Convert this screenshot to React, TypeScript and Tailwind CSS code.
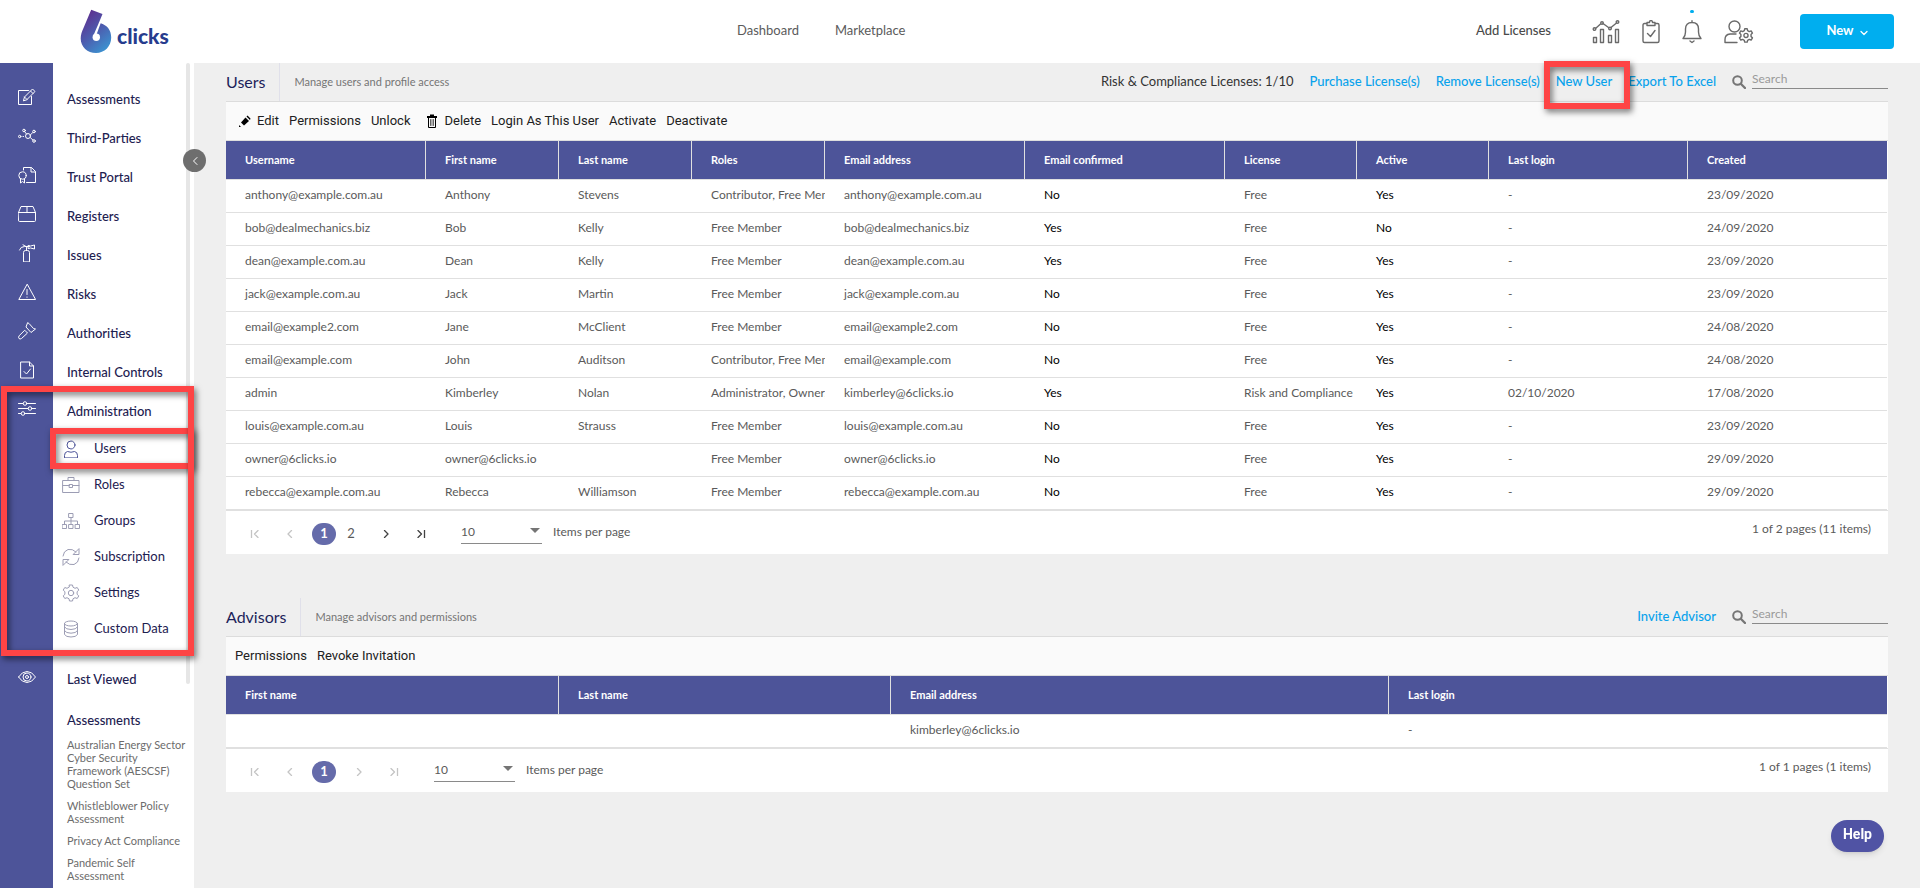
import type { ReactNode } from 'react'
import clsx from 'clsx'

interface IconProps {
  children: ReactNode
  className?: string
  box?: string
  weight?: number
}

// Thin line icon, one unit per pixel at its usual size
function Icon({ children, className = 'size-[18px]', box = '0 0 18 18', weight = 1 }: IconProps) {
  return (
    <svg
      viewBox={box}
      className={clsx('shrink-0', className)}
      fill="none"
      stroke="currentColor"
      strokeWidth={weight}
      strokeLinecap="round"
      strokeLinejoin="round"
      aria-hidden="true"
    >
      {children}
    </svg>
  )
}

const modules = [
  {
    label: 'Assessments',
    icon: (
      <>
        <path d="M10.500 2.500h-10v14h13V8.500" />
        <path d="M5.500 12.500l1-3.500 8-8 2.500 2.500-8 8zM12.500 3l2.500 2.500M6.500 9l2.500 2.500" />
      </>
    ),
  },
  {
    label: 'Third-Parties',
    icon: (
      <>
        <circle cx="10" cy="9" r="2.500" />
        <circle cx="6" cy="3.500" r="1.300" />
        <circle cx="16" cy="4.500" r="1.300" />
        <circle cx="16" cy="14" r="1.300" />
        <circle cx="1.700" cy="9.500" r="1.200" />
        <path d="M6.700 4.700 8.500 7M12.300 8l2.500-2.500M12.300 10.500l2.500 2.500M5 9.500h.5" />
      </>
    ),
  },
  {
    label: 'Trust Portal',
    icon: (
      <>
        <path d="M5.500 4V1.500h8l4 4v11h-9M13 1.500v4.500h4.500" />
        <circle cx="4.500" cy="9.500" r="3.700" />
        <path d="M2.500 13v4l2-1.500 2 1.500v-4" />
      </>
    ),
  },
  {
    label: 'Registers',
    icon: <path d="M.5 7.500h17v8q0 1-1 1h-15q-1 0-1-1zM.5 7.500l2.500-6h12l2.500 6M9 1.500v6" />,
  },
  {
    label: 'Issues',
    icon: (
      <>
        <path d="M5.500 17.500v-9q0-2 2-2h2q2 0 2 2v9zM8.500 6.500v-3M1.500 6q1-3.500 5-3.500h5M5 .8l3 1.700" />
        <path d="M10.500 1.500l2 .5 4-1v4l-4-1-2 .5z" />
      </>
    ),
  },
  {
    label: 'Risks',
    icon: (
      <>
        <path d="M9 1.500.8 16.500h16.400z" />
        <path d="M9 6.500v5M9 14v.3" />
      </>
    ),
  },
  {
    label: 'Authorities',
    icon: (
      <>
        <path d="M9.500 1l-1.500 4 5 5.500L17.500 7l-2-.5-4-4.500z" />
        <path d="M7 8.500l2.500 2.500-6 5.500q-1.500 1-2.500 0t0-2.500z" />
      </>
    ),
  },
  {
    label: 'Internal Controls',
    icon: (
      <>
        <path d="M3 1h8.500l4 4v12H3zM11.500 1v4h4" />
        <path d="M6 10.500l2.500 2.500 4-5" />
      </>
    ),
  },
]

const slidersIcon = (
  <>
    <path d="M.5 3.500h4.500M9 3.500h8.500M.5 8.500h9.500M14 8.500h3.500M.5 13.500h2.500M7 13.500h10.500" />
    <circle cx="7" cy="3.500" r="1.800" />
    <circle cx="12" cy="8.500" r="1.800" />
    <circle cx="5" cy="13.500" r="1.800" />
  </>
)

const gearPath =
  'M7.500 1h3l.5 2.200 2 1.100 2.200-.8 1.600 2.600-1.700 1.600v2.600l1.700 1.600-1.600 2.600-2.200-.8-2 1.100-.5 2.200h-3L7 14.800l-2-1.100-2.200.8-1.600-2.600 1.700-1.600V7.700L1.200 6.100l1.600-2.600 2.200.8 2-1.100z'

const adminItems = [
  {
    label: 'Users',
    icon: (
      <>
        <circle cx="9" cy="5" r="4" />
        <path d="M2.500 17.500v-2q0-3.500 3-4 3.500 1.500 7 0 3 .5 3 4v2z" />
      </>
    ),
  },
  {
    label: 'Roles',
    icon: <path d="M1 4.500h16v12H1zM6 4.500v-3h6v3M1 9.500h6.500M10.500 9.500H17M7.500 8.500h3v3h-3z" />,
  },
  {
    label: 'Groups',
    icon: (
      <path d="M7 1.500h4v4H7zM.5 12.500h4v4h-4zM7 12.500h4v4H7zM13.500 12.500h4v4h-4zM9 5.500v7M2.500 12.500V9h13v3.500" />
    ),
  },
  {
    label: 'Subscription',
    icon: (
      <>
        <path d="M1 8q.5-5 5-6.500 4.500-1 8 2.500M17 10q-.5 5-5 6.500-4.500 1-8-2.500" />
        <path d="M17 1v5.500h-5.500zM1 17v-5.500h5.500z" />
      </>
    ),
  },
  {
    label: 'Settings',
    icon: (
      <>
        <path d={gearPath} />
        <circle cx="9" cy="9" r="2.700" />
      </>
    ),
  },
  {
    label: 'Custom Data',
    icon: (
      <>
        <ellipse cx="9" cy="3.500" rx="6.500" ry="2.500" />
        <path d="M2.500 3.500v11q1.500 2.500 6.500 2.500t6.500-2.500v-11M2.500 7q1.500 2.500 6.500 2.500T15.500 7M2.500 10.700q1.500 2.500 6.500 2.500t6.500-2.500" />
      </>
    ),
  },
]

const recentAssessments = [
  'Australian Energy Sector Cyber Security Framework (AESCSF) Question Set',
  'Whistleblower Policy Assessment',
  'Privacy Act Compliance',
  'Pandemic Self Assessment',
]

interface Column {
  title: string
  width: string
  strong?: boolean
}

const userColumns: Column[] = [
  { title: 'Username', width: 'w-[200px]' },
  { title: 'First name', width: 'w-[133px]' },
  { title: 'Last name', width: 'w-[133px]' },
  { title: 'Roles', width: 'w-[133px]' },
  { title: 'Email address', width: 'w-[200px]' },
  { title: 'Email confirmed', width: 'w-[200px]', strong: true },
  { title: 'License', width: 'w-[132px]' },
  { title: 'Active', width: 'w-[132px]', strong: true },
  { title: 'Last login', width: 'w-[199px]' },
  { title: 'Created', width: 'w-[199px]' },
]

const users = [
  ['anthony@example.com.au', 'Anthony', 'Stevens', 'Contributor, Free Member', 'anthony@example.com.au', 'No', 'Free', 'Yes', '-', '23/09/2020'],
  ['bob@dealmechanics.biz', 'Bob', 'Kelly', 'Free Member', 'bob@dealmechanics.biz', 'Yes', 'Free', 'No', '-', '24/09/2020'],
  ['dean@example.com.au', 'Dean', 'Kelly', 'Free Member', 'dean@example.com.au', 'Yes', 'Free', 'Yes', '-', '23/09/2020'],
  ['jack@example.com.au', 'Jack', 'Martin', 'Free Member', 'jack@example.com.au', 'No', 'Free', 'Yes', '-', '23/09/2020'],
  ['email@example2.com', 'Jane', 'McClient', 'Free Member', 'email@example2.com', 'No', 'Free', 'Yes', '-', '24/08/2020'],
  ['email@example.com', 'John', 'Auditson', 'Contributor, Free Member', 'email@example.com', 'No', 'Free', 'Yes', '-', '24/08/2020'],
  ['admin', 'Kimberley', 'Nolan', 'Administrator, Owner,', 'kimberley@6clicks.io', 'Yes', 'Risk and Compliance', 'Yes', '02/10/2020', '17/08/2020'],
  ['louis@example.com.au', 'Louis', 'Strauss', 'Free Member', 'louis@example.com.au', 'No', 'Free', 'Yes', '-', '23/09/2020'],
  ['owner@6clicks.io', 'owner@6clicks.io', '', 'Free Member', 'owner@6clicks.io', 'No', 'Free', 'Yes', '-', '29/09/2020'],
  ['rebecca@example.com.au', 'Rebecca', 'Williamson', 'Free Member', 'rebecca@example.com.au', 'No', 'Free', 'Yes', '-', '29/09/2020'],
]

const advisorColumns: Column[] = [
  { title: 'First name', width: 'w-[333px]' },
  { title: 'Last name', width: 'w-[332px]' },
  { title: 'Email address', width: 'w-[498px]' },
  { title: 'Last login', width: 'w-[498px]' },
]

const advisors = [['', '', 'kimberley@6clicks.io', '-']]

function Highlight({ className }: { className: string }) {
  return (
    <span
      className={clsx(
        'pointer-events-none absolute z-20 border-6 border-[#fe4445] drop-shadow-[2px_3px_3px_rgba(0,0,0,0.55)]',
        className,
      )}
    />
  )
}

function Logo() {
  return (
    <a href="#" className="flex items-center gap-1" aria-label="6 clicks">
      <svg viewBox="80 9 33 45" className="h-[45px] w-[33px]" aria-hidden="true">
        <defs>
          <linearGradient id="six" x1="0.2" y1="0" x2="0.8" y2="1">
            <stop offset="0" stopColor="#5f2a8c" />
            <stop offset="0.5" stopColor="#4d5cae" />
            <stop offset="1" stopColor="#3a97d3" />
          </linearGradient>
        </defs>
        <path
          d="M91.200 9.700 102.500 14 98.700 23.300 100.800 23.300C107.500 25.500 111.200 30.500 111.200 37.500 111.200 46.500 104.500 53 96 53 87.500 53 80.700 47 80.700 38.500 80.700 34.500 82 31.500 83.500 28z"
          fill="url(#six)"
        />
        <circle cx="96.300" cy="37.300" r="3.700" fill="#fff" />
        <path d="M101.300 21.500 99 22.500 93.200 36 96.500 34.500z" fill="#fff" />
      </svg>
      <span className="pt-2 text-[21px] leading-6 font-black text-[#263c8e]">clicks</span>
    </a>
  )
}

function TopBar() {
  return (
    <header className="flex h-[63px] items-center bg-white pr-[26px] pl-20 text-[13px] text-[#5b5b5b]">
      <div className="w-[657px]">
        <Logo />
      </div>
      <nav className="flex gap-9 pb-0.5" aria-label="Primary">
        <a href="#">Dashboard</a>
        <a href="#">Marketplace</a>
      </nav>
      <div className="flex flex-1 items-center justify-end">
        <a href="#" className="mr-[41px] pb-0.5 font-medium text-[#4a4a4a]">
          Add Licenses
        </a>
        <div className="flex items-center gap-[22px] text-[#6a6a6a]">
          <button type="button" aria-label="Reports">
            <Icon className="h-6 w-7" box="0 0 28 24" weight={1.4}>
              <path d="M1.500 17.500h3v5h-3zM8.500 9.500h3v13h-3zM16.500 15.500h3v7h-3zM23.500 9.500h3v13h-3z" />
              <path d="M3.500 8.500l5-4.500M11 3.500l5.500 4M19 7.500l5.500-4.500" />
              <circle cx="2.500" cy="9" r="1.300" />
              <circle cx="10" cy="3" r="1.300" />
              <circle cx="18" cy="8.500" r="1.300" />
              <circle cx="25.500" cy="2" r="1.300" />
            </Icon>
          </button>
          <button type="button" aria-label="Tasks">
            <Icon className="h-6 w-[18px]" box="0 0 18 24" weight={1.4}>
              <path d="M4.500 3.500h-2q-1.500 0-1.500 1.500v16q0 1.500 1.500 1.500h13q1.500 0 1.500-1.500V5q0-1.500-1.500-1.500h-2" />
              <path d="M5 2.500h2.500q0-2 1.500-2t1.500 2H13v3H5zM5.500 13.500l3 3 4.500-6" />
            </Icon>
          </button>
          <button type="button" aria-label="Notifications" className="relative">
            <Icon className="h-6 w-5" box="0 0 20 24" weight={1.4}>
              <path d="M1 18.500q2.500-2.500 2.500-6.500V9q0-6.500 6.500-6.500T16.500 9v3q0 4 2.500 6.500zM10 .8v1.700M8 21l2 1.500 2-1.500" />
            </Icon>
            <span className="absolute -top-2.5 left-2 h-[3px] w-1 rounded-sm bg-[#00aeef]" />
          </button>
          <button type="button" aria-label="Account settings">
            <Icon className="h-6 w-[30px]" box="0 0 30 24" weight={1.4}>
              <circle cx="10.500" cy="6.500" r="5.500" />
              <path d="M13 22.500H1v-3q0-5 5-5.500h6" />
              <g transform="translate(14.500 8) scale(.83)">
                <path d={gearPath} strokeWidth="1.700" />
                <circle cx="9" cy="9" r="2.500" strokeWidth="1.700" />
              </g>
            </Icon>
          </button>
        </div>
        <button
          type="button"
          className="ml-[46px] flex h-[35px] w-[94px] items-center justify-center gap-1.5 rounded-sm bg-[#00aeef] pb-0.5 text-[13px] font-bold text-white"
        >
          New
          <Icon className="mt-1 h-1.5 w-2" box="0 0 8 6">
            <path d="M1 1.500l3 3 3-3" strokeWidth="1.300" />
          </Icon>
        </button>
      </div>
    </header>
  )
}

function Sidebar() {
  return (
    <aside className="relative flex shrink-0">
      <div className="flex w-[53px] flex-col items-center bg-[#4d5499] pt-3.5 text-white">
        {modules.map((item) => (
          <span key={item.label} className="flex h-[39px] items-center">
            <Icon>{item.icon}</Icon>
          </span>
        ))}
        <span className="flex h-[39px] items-center">
          <Icon>{slidersIcon}</Icon>
        </span>
        <span className="mt-[229px] flex h-[39px] items-center">
          <Icon>
            <path d="M.5 9Q4 3.500 9 3.500T17.500 9Q14 14.500 9 14.500T.5 9z" />
            <circle cx="9" cy="9" r="4" />
            <circle cx="9" cy="9" r="1.500" />
          </Icon>
        </span>
      </div>

      <nav className="relative w-[141px] bg-white pt-[17px] text-[13px] text-[#1d2050]" aria-label="Modules">
        <ul>
          {modules.map((item) => (
            <li key={item.label}>
              <a href="#" className="flex h-[39px] items-center pl-3.5 font-medium">
                {item.label}
              </a>
            </li>
          ))}
          <li className="relative">
            <a href="#" className="flex h-[39px] items-center pl-3.5 font-medium">
              Administration
            </a>
            <ul>
              {adminItems.map((item, i) => (
                <li key={item.label} className="relative">
                  <a href="#" className="flex h-9 items-center gap-3.5 pl-[9px]">
                    <span className={i === 0 ? 'text-[#4d5499]' : 'text-[#9c9db4]'}>
                      <Icon>{item.icon}</Icon>
                    </span>
                    {item.label}
                  </a>
                  {i === 0 && <Highlight className="-top-[3px] right-0 -bottom-[2px] -left-[3px]" />}
                </li>
              ))}
            </ul>
            <Highlight className="-top-1.5 right-0 -bottom-[9px] -left-[52px]" />
          </li>
        </ul>

        <div className="mt-[13px] pl-3.5">
          <h2 className="flex h-[39px] items-center font-medium">Last Viewed</h2>
          <h3 className="mt-[11px] mb-2 leading-5 font-medium">Assessments</h3>
          <ul className="flex flex-col gap-[9px] text-[11px] leading-[13px] text-[#6c6c6c]">
            {recentAssessments.map((name) => (
              <li key={name} className="max-w-[120px]">
                <a href="#">{name}</a>
              </li>
            ))}
          </ul>
        </div>

        {/* scroll thumb */}
        <span className="absolute top-0 right-1 h-[621px] w-1 rounded-sm bg-[#e6e6e6]" />
      </nav>

      <button
        type="button"
        aria-label="Collapse menu"
        className="absolute top-[86px] -right-3 z-10 flex size-[23px] items-center justify-center rounded-full bg-[#6e6e6e] text-white"
      >
        <Icon className="h-2 w-1.5" box="0 0 6 8">
          <path d="M5 .5 1.500 4 5 7.500" />
        </Icon>
      </button>
    </aside>
  )
}

interface SectionHeaderProps {
  title: string
  subtitle: string
  searchId: string
  children: ReactNode
}

function SectionHeader({ title, subtitle, searchId, children }: SectionHeaderProps) {
  return (
    <div className="flex h-[39px] items-center border-b border-[#dcdcdc]">
      <h1 className="flex h-full items-center border-r border-[#e0e0ea] pr-3.5 text-base text-[#1d1f5a]">{title}</h1>
      <p className="pl-3.5 text-[11px] text-[#757575]">{subtitle}</p>
      <div className="ml-auto flex items-center gap-4 text-[13px] text-[#09a2ec]">
        {children}
        <div className="flex items-center gap-1.5">
          <label htmlFor={searchId} aria-label="Search">
            <Icon className="size-3.5 text-[#757575]" box="0 0 14 14">
              <circle cx="5.500" cy="5.500" r="4.300" strokeWidth="2" />
              <path d="M9 9l4 4" strokeWidth="2.300" />
            </Icon>
          </label>
          <input
            id={searchId}
            type="text"
            placeholder="Search"
            className="mb-1.5 h-[19px] w-[136px] border-b border-[#8a8a8a] bg-transparent text-xs text-gray-700 outline-none placeholder:text-[#9a9a9a]"
          />
        </div>
      </div>
    </div>
  )
}

function Toolbar({ children }: { children: ReactNode }) {
  return (
    <div className="flex h-[39px] items-center gap-2.5 border-b border-[#dedede] bg-[#fafafa] px-[9px] font-[Roboto,sans-serif] text-[13px] text-[#212121]">
      {children}
    </div>
  )
}

function DataTable({ columns, rows }: { columns: Column[]; rows: string[][] }) {
  return (
    <div className="pr-px">
      <table className="w-full table-fixed border-separate border-spacing-0 text-left text-[12px]">
        <thead>
          <tr className="bg-[#4d5499] text-white">
            {columns.map((col) => (
              <th
                key={col.title}
                className={clsx(
                  'h-[39px] border-r border-b border-r-[#e0e0e0] border-b-[#e0e0e0] p-0 pl-[19px] text-[11px] font-bold last:border-r-0',
                  col.width,
                )}
              >
                {col.title}
              </th>
            ))}
          </tr>
        </thead>
        <tbody>
          {rows.map((row, r) => (
            <tr key={r}>
              {row.map((cell, c) => (
                <td
                  key={c}
                  className={clsx(
                    'h-[33px] overflow-hidden border-b border-[#e0e0e0] p-0 pb-0.5 pl-[19px] whitespace-nowrap',
                    columns[c].strong ? 'text-black' : 'text-[#5a5a5a]',
                  )}
                >
                  {cell}
                </td>
              ))}
            </tr>
          ))}
        </tbody>
      </table>
    </div>
  )
}

interface PagerProps {
  id: string
  pages: number[]
  summary: string
}

function Pager({ id, pages, summary }: PagerProps) {
  const more = pages.length > 1
  const nextColor = more ? 'text-[#424242]' : 'text-[#c4c4c4]'
  return (
    <div className="flex h-11 items-center border-t border-[#e0e0e0] pr-[17px] pl-[11px] text-[12px] text-[#5a5a5a]">
      <div className="flex items-center pt-0.5">
        <button type="button" disabled aria-label="First page" className="flex w-[35px] justify-center text-[#c4c4c4]">
          <Icon className="h-2 w-2.5" box="0 0 10 8">
            <path d="M1.500 0v8M8 .5 4.500 4 8 7.500" strokeWidth="1.300" />
          </Icon>
        </button>
        <button type="button" disabled aria-label="Previous page" className="flex w-[35px] justify-center text-[#c4c4c4]">
          <Icon className="h-2 w-1.5" box="0 0 6 8">
            <path d="M4.500 .5 1 4l3.500 3.500" strokeWidth="1.300" />
          </Icon>
        </button>
        <div className="flex gap-[3px] px-[5px]">
          {pages.map((page) => (
            <button
              key={page}
              type="button"
              className={clsx(
                'h-[22px] w-6 rounded-full text-[13px]',
                page === 1 && 'bg-[#656baa] font-bold text-white',
              )}
            >
              {page}
            </button>
          ))}
        </div>
        <button type="button" disabled={!more} aria-label="Next page" className={clsx('flex w-[35px] justify-center', nextColor)}>
          <Icon className="h-2 w-1.5" box="0 0 6 8">
            <path d="M1.500 .5 5 4 1.500 7.500" strokeWidth="1.300" />
          </Icon>
        </button>
        <button type="button" disabled={!more} aria-label="Last page" className={clsx('flex w-[35px] justify-center', nextColor)}>
          <Icon className="h-2 w-2.5" box="0 0 10 8">
            <path d="M8.500 0v8M2 .5 5.500 4 2 7.500" strokeWidth="1.300" />
          </Icon>
        </button>
      </div>
      <div className="relative ml-[23px] w-[81px]">
        <select
          id={id}
          defaultValue="10"
          className="h-[23px] w-full appearance-none border-b border-[#8a8a8a] bg-transparent text-[12px] outline-none"
        >
          <option>10</option>
          <option>20</option>
          <option>50</option>
        </select>
        <span className="pointer-events-none absolute top-[7px] right-0.5 border-x-[5px] border-t-[5px] border-x-transparent border-t-[#757575]" />
      </div>
      <label htmlFor={id} className="pb-0.5 pl-[11px]">
        Items per page
      </label>
      <span className="ml-auto pb-2">{summary}</span>
    </div>
  )
}

export default function App() {
  return (
    <div className="flex min-h-screen flex-col bg-[#efefef] font-[Lato,sans-serif]">
      <TopBar />
      <div className="flex flex-1">
        <Sidebar />
        <main className="min-w-0 flex-1 px-8">
          <section>
            <SectionHeader title="Users" subtitle="Manage users and profile access" searchId="user-search">
              <span className="text-[#333]">Risk &amp; Compliance Licenses: 1/10</span>
              <a href="#" className="font-medium">Purchase License(s)</a>
              <a href="#" className="font-medium">Remove License(s)</a>
              <span className="relative">
                <a href="#" className="font-medium">New User</a>
                <Highlight className="-top-[11px] -right-[18px] -bottom-[17px] -left-3" />
              </span>
              <a href="#" className="font-medium">Export To Excel</a>
            </SectionHeader>
            <div className="bg-white">
              <Toolbar>
                <button type="button" className="flex items-center gap-1.5 pl-1">
                  <Icon className="size-3 text-black" box="0 0 12 12">
                    <path d="M2 7.500 6.500 2.500l3.500 3.500-5 4.500z" fill="currentColor" stroke="none" />
                    <path d="M8.500 .5 11.500 3.500l-.5 1.500L7.500 1.500zM0 12v-2l2 2z" fill="currentColor" stroke="none" />
                  </Icon>
                  Edit
                </button>
                <button type="button">Permissions</button>
                <button type="button">Unlock</button>
                <button type="button" className="flex items-center gap-1.5 pl-1.5">
                  <Icon className="h-3.5 w-3 text-black" box="0 0 12 14">
                    <path d="M1 3h10M4 1.500h4" strokeWidth="2" strokeLinecap="butt" />
                    <path d="M2.500 4v9.500h7V4" />
                    <path d="M4.500 5.500v6M6 5.500v6M7.500 5.500v6" strokeWidth=".6" />
                  </Icon>
                  Delete
                </button>
                <button type="button">Login As This User</button>
                <button type="button">Activate</button>
                <button type="button">Deactivate</button>
              </Toolbar>
              <DataTable columns={userColumns} rows={users} />
              <Pager id="user-page-size" pages={[1, 2]} summary="1 of 2 pages (11 items)" />
            </div>
          </section>

          <section className="mt-11">
            <SectionHeader title="Advisors" subtitle="Manage advisors and permissions" searchId="advisor-search">
              <a href="#" className="font-medium">Invite Advisor</a>
            </SectionHeader>
            <div className="bg-white">
              <Toolbar>
                <button type="button">Permissions</button>
                <button type="button">Revoke Invitation</button>
              </Toolbar>
              <DataTable columns={advisorColumns} rows={advisors} />
              <Pager id="advisor-page-size" pages={[1]} summary="1 of 1 pages (1 items)" />
            </div>
          </section>
        </main>
      </div>

      <button
        type="button"
        className="fixed right-9 bottom-9 h-8 rounded-full bg-[#5053a4] px-3 pb-1 font-[Roboto,sans-serif] text-sm font-bold text-white shadow-md"
      >
        Help
      </button>
    </div>
  )
}
